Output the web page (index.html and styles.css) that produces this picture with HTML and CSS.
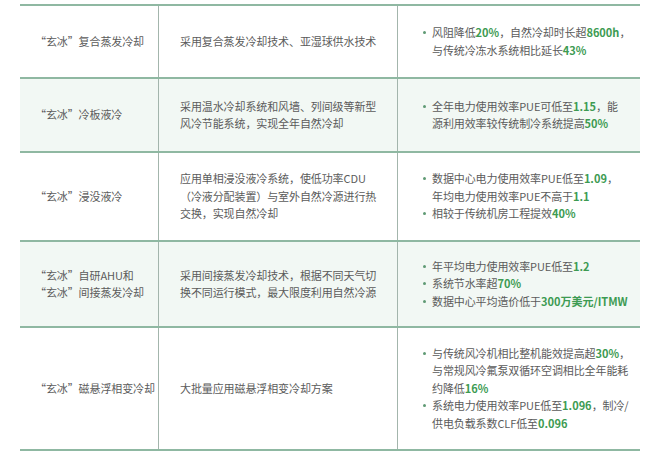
FILE: index.html
```html
<!DOCTYPE html>
<html lang="zh">
<head>
<meta charset="utf-8">
<link rel="stylesheet" href="styles.css">
</head>
<body>
<div class="table">
  <div class="row r1">
    <div class="cell c1">“玄冰”复合蒸发冷却</div>
    <div class="cell c2">采用复合蒸发冷却技术、亚湿球供水技术</div>
    <div class="cell c3"><ul>
      <li>风阻降低<b>20%</b>，自然冷却时长超<b>8600h</b>，<br>与传统冷冻水系统相比延长<b>43%</b></li>
    </ul></div>
  </div>
  <div class="row r2 alt">
    <div class="cell c1">“玄冰”冷板液冷</div>
    <div class="cell c2">采用温水冷却系统和风墙、列间级等新型<br>风冷节能系统，实现全年自然冷却</div>
    <div class="cell c3"><ul>
      <li>全年电力使用效率PUE可低至<b>1.15</b>，能<br>源利用效率较传统制冷系统提高<b>50%</b></li>
    </ul></div>
  </div>
  <div class="row r3">
    <div class="cell c1">“玄冰”浸没液冷</div>
    <div class="cell c2">应用单相浸没液冷系统，使低功率CDU<br>（冷液分配装置）与室外自然冷源进行热<br>交换，实现自然冷却</div>
    <div class="cell c3"><ul>
      <li>数据中心电力使用效率PUE低至<b>1.09</b>，<br>年均电力使用效率PUE不高于<b>1.1</b></li>
      <li>相较于传统机房工程提效<b>40%</b></li>
    </ul></div>
  </div>
  <div class="row r4 alt">
    <div class="cell c1">“玄冰”自研AHU和<br>“玄冰”间接蒸发冷却</div>
    <div class="cell c2">采用间接蒸发冷却技术，根据不同天气切<br>换不同运行模式，最大限度利用自然冷源</div>
    <div class="cell c3"><ul>
      <li>年平均电力使用效率PUE低至<b>1.2</b></li>
      <li>系统节水率超<b>70%</b></li>
      <li>数据中心平均造价低于<b>300万美元/ITMW</b></li>
    </ul></div>
  </div>
  <div class="row r5">
    <div class="cell c1">“玄冰”磁悬浮相变冷却</div>
    <div class="cell c2">大批量应用磁悬浮相变冷却方案</div>
    <div class="cell c3"><ul>
      <li>与传统风冷机相比整机能效提高超<b>30%</b>，<br>与常规风冷氟泵双循环空调相比全年能耗<br>约降低<b>16%</b></li>
      <li>系统电力使用效率PUE低至<b>1.096</b>，制冷/<br>供电负载系数CLF低至<b>0.096</b></li>
    </ul></div>
  </div>
</div>
</body>
</html>
```

FILE: styles.css
```css
html, body {
  margin: 0;
  padding: 0;
  background: #ffffff;
}
body {
  font-family: "Noto Sans CJK SC", "Noto Sans", sans-serif;
  font-size: 11px;
  color: #5b5b5b;
}
.table {
  margin: 4px 0 0 20px;
  width: 620px;
  border-top: 2px solid #8fb8a2;
}
.row {
  display: grid;
  grid-template-columns: 139px 239px 242px;
  border-bottom: 2px solid #8fb8a2;
  box-sizing: border-box;
}
.row.alt {
  background: #f2f8f4;
}
.r1 { height: 73px; }
.r2 { height: 74px; }
.r3 { height: 89px; }
.r4 { height: 86px; }
.r5 { height: 123px; }
.cell {
  display: flex;
  flex-direction: column;
  justify-content: center;
  line-height: 17.5px;
  letter-spacing: -0.1px;
  white-space: nowrap;
}
.c1 {
  padding-left: 15px;
  border-right: 1px solid #a3b5ac;
}
.c2 {
  padding: 0 10px 0 21px;
  border-right: 1px solid #a3b5ac;
}
.c3 {
  padding: 0 2px 0 34px;
}
ul {
  margin: 0;
  padding: 0;
  list-style: none;
}
li {
  position: relative;
}
li::before {
  content: "";
  position: absolute;
  left: -9px;
  top: 7px;
  width: 3px;
  height: 3px;
  border-radius: 50%;
  background: #5f9a74;
}
b {
  color: #3d9b52;
  font-weight: 700;
  letter-spacing: 0;
}
```
